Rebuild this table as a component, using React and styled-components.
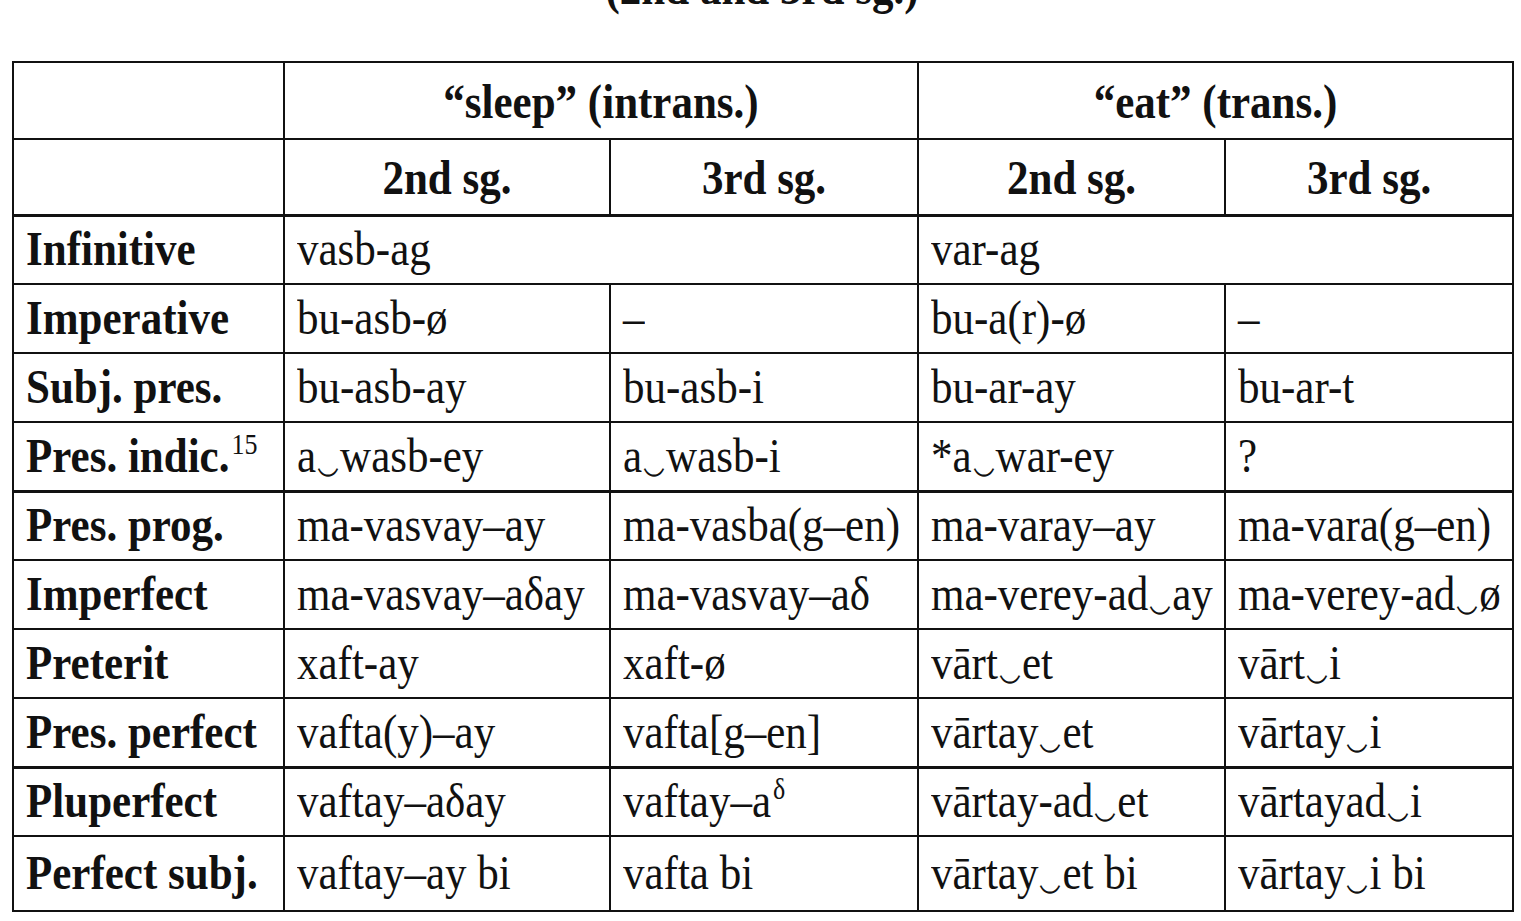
import styled, { createGlobalStyle } from "styled-components";

const Global = createGlobalStyle`
  html, body {
    margin: 0;
    padding: 0;
    background: #fff;
  }
  body {
    font-family: "Liberation Serif", "Times New Roman", serif;
    color: #111;
    overflow: hidden;
  }
`;

const Page = styled.div`
  width: 1521px;
  height: 921px;
  overflow: hidden;
  padding-left: 12px;
  box-sizing: border-box;
`;

const Title = styled.h2`
  margin: -31px 0 0 0;
  height: 92px;
  font-size: 43px;
  font-weight: 700;
  line-height: 1;
  text-align: center;
  width: 1500px;
  transform: scaleY(1.12);
`;

const Table = styled.table`
  border-collapse: collapse;
  table-layout: fixed;
  width: 1500px;
  font-size: 43px;
`;

const Row = styled.tr`
  height: ${(p) => p.$h || 69}px;
  border-bottom: ${(p) => (p.$thick ? 3 : 2)}px solid #111;
`;

const Head = styled.th`
  border: 2px solid #111;
  font-weight: 700;
  text-align: center;
  vertical-align: middle;
  padding: 3px 0 0 0;
  line-height: 1;
`;

const Label = styled.th`
  border: 2px solid #111;
  font-weight: 700;
  text-align: left;
  padding: 0 0 0 12px;
  line-height: 1;
  white-space: nowrap;
`;

const Cell = styled.td`
  border: 2px solid #111;
  padding: 0 0 0 12px;
  line-height: 1;
  white-space: nowrap;
`;

const Text = styled.span`
  display: inline-block;
  transform: scaleY(1.12);
  transform-origin: 50% 60%;
`;

const Sup = styled.sup`
  font-size: 26px;
  font-weight: 400;
  vertical-align: 16px;
  line-height: 0;
  margin-left: 2px;
`;

const Tie = styled.span`
  display: inline-block;
  font-size: 36px;
  margin: 0 1px;
  vertical-align: 5px;
`;

const widths = [271, 326, 308, 307, 288];

function Form({ text }) {
  const parts = text.split("‿");
  return parts.map((p, i) => (
    <span key={i}>
      {p}
      {i < parts.length - 1 && <Tie>‿</Tie>}
    </span>
  ));
}

const rows = [
  { label: "Infinitive", span: ["vasb-ag", "var-ag"] },
  { label: "Imperative", cells: ["bu-asb-ø", "–", "bu-a(r)-ø", "–"] },
  { label: "Subj. pres.", cells: ["bu-asb-ay", "bu-asb-i", "bu-ar-ay", "bu-ar-t"] },
  { label: "Pres. indic.", sup: "15", thick: true, cells: ["a‿wasb-ey", "a‿wasb-i", "*a‿war-ey", "?"] },
  { label: "Pres. prog.", cells: ["ma-vasvay–ay", "ma-vasba(g–en)", "ma-varay–ay", "ma-vara(g–en)"] },
  { label: "Imperfect", cells: ["ma-vasvay–aδay", "ma-vasvay–aδ", "ma-verey-ad‿ay", "ma-verey-ad‿ø"] },
  { label: "Preterit", cells: ["xaft-ay", "xaft-ø", "vārt‿et", "vārt‿i"] },
  { label: "Pres. perfect", thick: true, cells: ["vafta(y)–ay", "vafta[g–en]", "vārtay‿et", "vārtay‿i"] },
  { label: "Pluperfect", cells: ["vaftay–aδay", "vaftay–a", "vārtay-ad‿et", "vārtayad‿i"], supAt: 1 },
  { label: "Perfect subj.", h: 75, cells: ["vaftay–ay bi", "vafta bi", "vārtay‿et bi", "vārtay‿i bi"] },
];

export default function App() {
  return (
    <Page>
      <Global />
      <Title>(2nd and 3rd sg.)</Title>
      <Table>
        <colgroup>
          {widths.map((w, i) => (
            <col key={i} style={{ width: w }} />
          ))}
        </colgroup>
        <thead>
          <Row $h={77}>
            <Head />
            <Head colSpan={2}>
              <Text>“sleep” (intrans.)</Text>
            </Head>
            <Head colSpan={2}>
              <Text>“eat” (trans.)</Text>
            </Head>
          </Row>
          <Row $h={76} $thick>
            <Head />
            <Head><Text>2nd sg.</Text></Head>
            <Head><Text>3rd sg.</Text></Head>
            <Head><Text>2nd sg.</Text></Head>
            <Head><Text>3rd sg.</Text></Head>
          </Row>
        </thead>
        <tbody>
          {rows.map((r) => (
            <Row key={r.label} $h={r.h} $thick={r.thick}>
              <Label>
                <Text>
                  {r.label}
                  {r.sup && <Sup>{r.sup}</Sup>}
                </Text>
              </Label>
              {r.span
                ? r.span.map((s) => (
                    <Cell key={s} colSpan={2}>
                      <Text>{s}</Text>
                    </Cell>
                  ))
                : r.cells.map((c, i) => (
                    <Cell key={i}>
                      <Text>
                        <Form text={c} />
                        {r.supAt === i && <Sup>δ</Sup>}
                      </Text>
                    </Cell>
                  ))}
            </Row>
          ))}
        </tbody>
      </Table>
    </Page>
  );
}
